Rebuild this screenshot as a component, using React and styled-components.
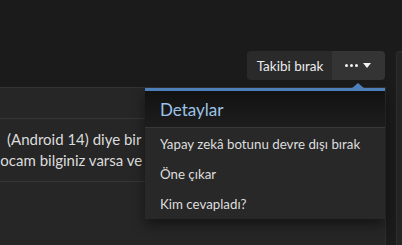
import React from 'react'
import styled, { createGlobalStyle } from 'styled-components'

const GlobalStyle = createGlobalStyle`
  html, body {
    margin: 0;
    padding: 0;
    background: #1b1b1b;
    font-family: Lato, "Noto Sans", sans-serif;
    overflow: hidden;
  }
`

const menuItems = ['Yapay zekâ botunu devre dışı bırak', 'Öne çıkar', 'Kim cevapladı?']

const App = () => {
  return (
    <>
      <GlobalStyle />
      <Page>
        <Main>
          <Toolbar>
            <ButtonGroup>
              <GroupButton>Takibi bırak</GroupButton>
              <GroupButton $more>
                <Dots>
                  <i /><i /><i />
                </Dots>
                <Caret />
              </GroupButton>
              <Arrow />
              <Dropdown>
                <DropHeader>Detaylar</DropHeader>
                <DropList>
                  {menuItems.map((text) => (
                    <DropItem key={text}>{text}</DropItem>
                  ))}
                </DropList>
              </Dropdown>
            </ButtonGroup>
          </Toolbar>
          <Card>
            <CardHead />
            <CardBody>
              <Line $indent={15}>(Android 14) diye bir sorun yaşıyorum, telefonu</Line>
              <Line>hocam bilginiz varsa ve sorunu çözebilirseniz</Line>
            </CardBody>
            <CardFoot />
          </Card>
        </Main>
        <Side />
      </Page>
    </>
  )
}

const Page = styled.div`
  display: flex;
  gap: 10px;
  height: 245px;
  padding-top: 51px;
  box-sizing: border-box;
`

const Main = styled.div`
  width: 386px;
  flex: none;
  display: flex;
  flex-direction: column;
`

const Side = styled.div`
  flex: 1;
  background: #242424;
  border-left: 1px solid #2e2e2e;
  border-top: 1px solid #2e2e2e;
  border-top-left-radius: 4px;
`

const Toolbar = styled.div`
  display: flex;
  justify-content: flex-end;
  padding-right: 1px;
`

const ButtonGroup = styled.div`
  position: relative;
  display: flex;
  height: 29px;
  border-radius: 4px;
`

const GroupButton = styled.div`
  display: flex;
  align-items: center;
  justify-content: center;
  gap: 5px;
  height: 100%;
  box-sizing: border-box;
  padding: ${(p) => (p.$more ? '0 2px 0 0' : '0 0 0 1px')};
  width: ${(p) => (p.$more ? '53px' : '85px')};
  background: ${(p) => (p.$more ? '#343434' : '#2a2a2a')};
  color: #ececec;
  font-size: 13.5px;
  border-radius: ${(p) => (p.$more ? '0 4px 4px 0' : '4px 0 0 4px')};
  white-space: nowrap;
`

const Dots = styled.span`
  display: flex;
  gap: 2px;
  i {
    width: 3px;
    height: 3px;
    border-radius: 50%;
    background: #f2f2f2;
  }
`

const Caret = styled.span`
  width: 0;
  height: 0;
  border-left: 4px solid transparent;
  border-right: 4px solid transparent;
  border-top: 5px solid #f2f2f2;
`

const Arrow = styled.span`
  position: absolute;
  top: 32px;
  right: 20px;
  width: 0;
  height: 0;
  border-left: 7px solid transparent;
  border-right: 7px solid transparent;
  border-bottom: 6px solid #4d7fb8;
  z-index: 3;
`

const Dropdown = styled.div`
  position: absolute;
  top: 37px;
  right: 0;
  width: 240px;
  border-top: 3px solid #4d7fb8;
  background: #282828;
  box-shadow: 0 6px 12px rgba(0, 0, 0, 0.45);
  z-index: 2;
`

const DropHeader = styled.div`
  height: 36px;
  display: flex;
  align-items: center;
  padding-left: 15px;
  background: linear-gradient(to bottom, #121212, #1d1d1d);
  border-bottom: 1px solid #383838;
  color: #9cc3e6;
  font-size: 17px;
`

const DropList = styled.div`
  display: flex;
  flex-direction: column;
  padding: 1px 0 0;
`

const DropItem = styled.div`
  height: 30px;
  display: flex;
  align-items: center;
  padding-left: 15px;
  color: #dedede;
  font-size: 13.3px;
  white-space: nowrap;
`

const Card = styled.div`
  margin-top: 7px;
  flex: 1;
  background: #262626;
  border-top: 1px solid #333;
  border-right: 1px solid #2d2d2d;
  display: flex;
  flex-direction: column;
`

const CardHead = styled.div`
  height: 30px;
  border-bottom: 1px solid #363636;
`

const CardBody = styled.div`
  padding: 10px 0;
  margin-left: -8px;
  border-bottom: 1px solid #363636;
  color: #dcdcdc;
  font-size: 15px;
  line-height: 21px;
  overflow: hidden;
`

const Line = styled.div`
  padding-left: ${(p) => p.$indent || 0}px;
  white-space: nowrap;
`

const CardFoot = styled.div`
  flex: 1;
`

export default App
